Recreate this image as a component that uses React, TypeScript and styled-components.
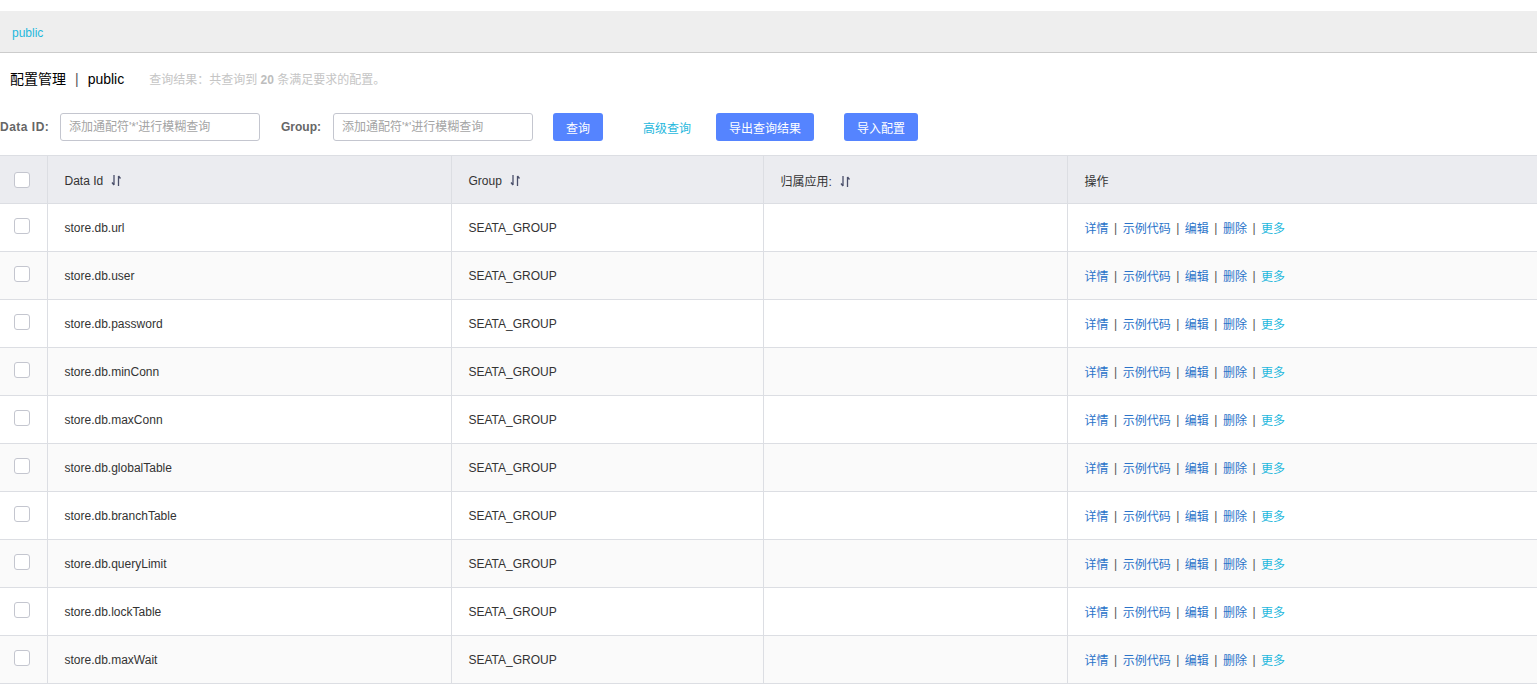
import React from 'react';
import styled, { createGlobalStyle } from 'styled-components';

const GlobalStyle = createGlobalStyle`
  html, body {
    margin: 0;
    padding: 0;
    background: #fff;
    font-family: "Liberation Sans", Arial, "Noto Sans CJK SC", sans-serif;
    color: #333;
    overflow: hidden;
  }
`;

const palette = {
  border: '#dcdee3',
  headerBg: '#ebecf0',
  primary: '#5584ff',
  cyan: '#1fb8dd',
  link: '#2a73c9',
};

const Page = styled.div`
  padding-top: 11px;
  width: 1537px;
`;

const NamespaceBar = styled.div`
  height: 42px;
  background: #eeeeee;
  border-bottom: 1px solid #cccccc;
  display: flex;
  align-items: center;
  padding: 2px 12px 0;
  box-sizing: border-box;
  font-size: 12px;
  color: ${palette.cyan};
`;

const TitleRow = styled.div`
  display: flex;
  align-items: baseline;
  height: 50px;
  padding: 15px 0 0 10px;
  box-sizing: border-box;
`;

const Title = styled.span`
  font-size: 14px;
  color: #000;
  font-family: "Liberation Sans", "Noto Sans CJK SC", sans-serif;

  .divider {
    margin: 0 9px;
    color: #555;
  }
`;

const Summary = styled.span`
  margin-left: 25px;
  font-size: 12px;
  color: #c5c5c5;

  strong {
    color: #bdbdbd;
  }
`;

const FilterRow = styled.div`
  display: flex;
  align-items: center;
  height: 28px;
  margin-top: 10px;
`;

const Label = styled.label<{ $width: number; $tracking?: number }>`
  width: ${(p) => p.$width}px;
  text-align: right;
  margin-right: 12px;
  white-space: nowrap;
  font-size: 12px;
  font-weight: bold;
  letter-spacing: ${(p) => p.$tracking ?? 0}px;
  color: #666;
`;

const SearchInput = styled.input<{ $gap: number }>`
  width: 200px;
  height: 28px;
  box-sizing: border-box;
  border: 1px solid #c4c6cf;
  border-radius: 3px;
  padding: 0 8px;
  font-size: 12px;
  font-family: inherit;
  outline: none;
  margin-right: ${(p) => p.$gap}px;

  &::placeholder {
    color: #a4a4a4;
  }
`;

const Button = styled.button<{ $width: number; $gap: number }>`
  width: ${(p) => p.$width}px;
  height: 28px;
  margin-left: ${(p) => p.$gap}px;
  border: none;
  border-radius: 3px;
  background: ${palette.primary};
  color: #fff;
  font-size: 12px;
  font-family: inherit;
  padding: 0;
  cursor: pointer;
`;

const TextLink = styled.a`
  margin-left: 40px;
  font-size: 12px;
  color: ${palette.cyan};
  cursor: pointer;
`;

const Table = styled.table`
  margin-top: 14px;
  width: 100%;
  border-collapse: collapse;
  table-layout: fixed;
  font-size: 12px;
  color: #333;
`;

const HeadCell = styled.th<{ $width?: number }>`
  ${(p) => (p.$width ? `width: ${p.$width}px;` : '')}
  height: 48px;
  background: ${palette.headerBg};
  border: 1px solid ${palette.border};
  border-left: none;
  text-align: left;
  font-weight: normal;
  padding: 2px 16px 0 17px;
  box-sizing: border-box;

  &:last-child {
    border-right: none;
  }
`;

const Row = styled.tr<{ $striped: boolean }>`
  background: ${(p) => (p.$striped ? '#fafafa' : '#fff')};
`;

const Cell = styled.td`
  height: 48px;
  border-bottom: 1px solid ${palette.border};
  border-right: 1px solid ${palette.border};
  padding: 1px 16px 0 17px;
  box-sizing: border-box;
  white-space: nowrap;

  &:last-child {
    border-right: none;
  }
`;

const CheckCell = styled(Cell)`
  padding: 0 0 0 14px;
  vertical-align: middle;
`;

const CheckHead = styled(HeadCell)`
  padding: 0 0 0 14px;
`;

const Checkbox = styled.span<{ $lift: number }>`
  display: block;
  width: 16px;
  height: 16px;
  box-sizing: border-box;
  border: 1px solid #c4c6cf;
  border-radius: 3px;
  background: #fff;
  margin-top: -${(p) => p.$lift}px;
`;

const SortIcon = styled.svg`
  margin-left: 8px;
  vertical-align: -2px;
`;

const Actions = styled.div`
  display: flex;
  align-items: center;
  margin-top: -1px;
`;

const ActionLink = styled.a<{ $more?: boolean }>`
  color: ${(p) => (p.$more ? palette.cyan : palette.link)};
  cursor: pointer;
`;

const Sep = styled.span`
  margin: 0 5.5px;
  color: #555;
`;

const Sort = () => (
  <SortIcon width="11" height="13" viewBox="0 0 11 13">
    <path d="M3 1v10M1 8.5L3 11" stroke="#4a4f6a" strokeWidth="1.3" fill="none" />
    <path d="M7.5 12V2M7.5 2L9.5 4.5" stroke="#4a4f6a" strokeWidth="1.3" fill="none" />
  </SortIcon>
);

const configs = [
  'store.db.url',
  'store.db.user',
  'store.db.password',
  'store.db.minConn',
  'store.db.maxConn',
  'store.db.globalTable',
  'store.db.branchTable',
  'store.db.queryLimit',
  'store.db.lockTable',
  'store.db.maxWait',
];

const actions = ['详情', '示例代码', '编辑', '删除'];

const App: React.FC = () => {
  return (
    <Page>
      <GlobalStyle />
      <NamespaceBar>public</NamespaceBar>

      <TitleRow>
        <Title>
          配置管理<span className="divider">|</span>public
        </Title>
        <Summary>
          查询结果：共查询到 <strong>20</strong> 条满足要求的配置。
        </Summary>
      </TitleRow>

      <FilterRow>
        <Label $width={48} $tracking={0.5}>Data ID:</Label>
        <SearchInput $gap={21} placeholder="添加通配符'*'进行模糊查询" />
        <Label $width={40}>Group:</Label>
        <SearchInput $gap={0} placeholder="添加通配符'*'进行模糊查询" />
        <Button $width={50} $gap={20}>查询</Button>
        <TextLink>高级查询</TextLink>
        <Button $width={98} $gap={25}>导出查询结果</Button>
        <Button $width={74} $gap={30}>导入配置</Button>
      </FilterRow>

      <Table>
        <thead>
          <tr>
            <CheckHead $width={47}>
              <Checkbox $lift={0} />
            </CheckHead>
            <HeadCell $width={404}>
              Data Id
              <Sort />
            </HeadCell>
            <HeadCell $width={312}>
              Group
              <Sort />
            </HeadCell>
            <HeadCell $width={304}>
              归属应用:
              <Sort />
            </HeadCell>
            <HeadCell>操作</HeadCell>
          </tr>
        </thead>
        <tbody>
          {configs.map((id, index) => (
            <Row key={id} $striped={index % 2 === 1}>
              <CheckCell>
                <Checkbox $lift={3} />
              </CheckCell>
              <Cell>{id}</Cell>
              <Cell>SEATA_GROUP</Cell>
              <Cell />
              <Cell>
                <Actions>
                  {actions.map((a) => (
                    <React.Fragment key={a}>
                      <ActionLink>{a}</ActionLink>
                      <Sep>|</Sep>
                    </React.Fragment>
                  ))}
                  <ActionLink $more>更多</ActionLink>
                </Actions>
              </Cell>
            </Row>
          ))}
        </tbody>
      </Table>
    </Page>
  );
};

export default App;
